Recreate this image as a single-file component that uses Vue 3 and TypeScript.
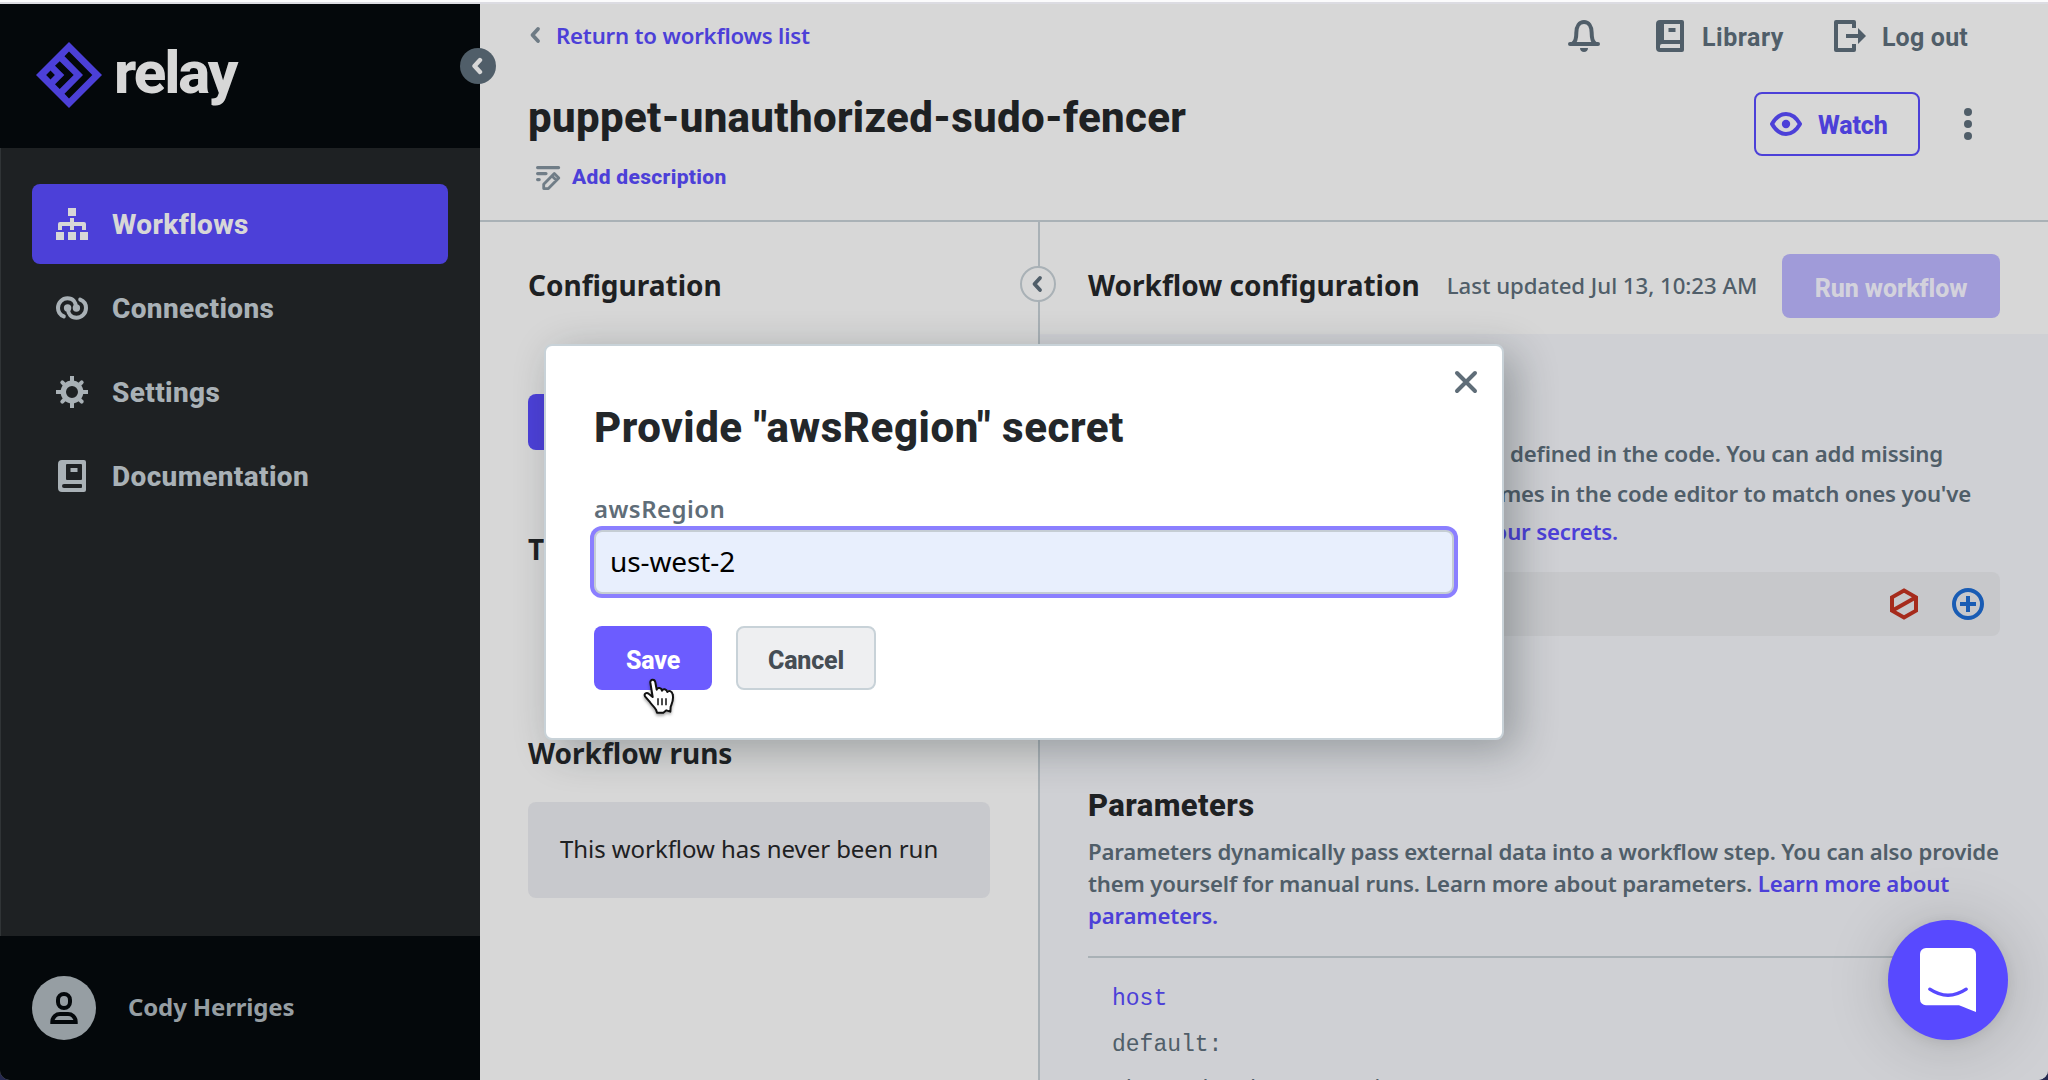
<script setup lang="ts">
import { ref } from 'vue'

interface NavItem {
  label: string
  icon: 'flow' | 'link' | 'gear' | 'book'
  active?: boolean
}

const navItems: NavItem[] = [
  { label: 'Workflows', icon: 'flow', active: true },
  { label: 'Connections', icon: 'link' },
  { label: 'Settings', icon: 'gear' },
  { label: 'Documentation', icon: 'book' },
]

const secretValue = ref('us-west-2')
const gearAngles = [45, 135, 225, 315]
</script>

<template>
  <div class="desktop">
    <div class="window">
      <div class="titlebar-edge"></div>
      <div class="app">
        <aside class="sidebar">
          <div class="brand">
            <svg class="brand-mark" width="66" height="66" viewBox="36 42 66 66">
              <path
                fill="#4c40d8"
                fill-rule="evenodd"
                d="M69 42L102 75L69 108L36 75ZM69 51.5L64.5 56.3L83 75L64.5 93.7L69 98.5L92.3 75ZM59.7 61.3L55 65.8L64.3 75L55 84.2L59.7 88.9L73.7 75ZM50.5 70.6L46.1 75L50.5 79.4L54.9 75Z"
              />
            </svg>
            <span class="brand-name">relay</span>
          </div>

          <nav class="nav">
            <a v-for="item in navItems" :key="item.label" class="nav-item" :class="{ active: item.active }">
              <svg v-if="item.icon === 'flow'" class="nav-icon" width="32" height="32" viewBox="0 0 32 32" fill="currentColor">
                <path d="M12 0h8v8h-8zM0 24h8v8H0zM12 24h8v8h-8zM24 24h8v8h-8z" />
                <path d="M14 10h4v4h10a2 2 0 0 1 2 2v6h-4v-4h-8v4h-4v-4H6v4H2v-6a2 2 0 0 1 2-2h10z" />
              </svg>
              <svg v-else-if="item.icon === 'link'" class="nav-icon" width="32" height="24" viewBox="0 0 32 24">
                <g fill="none" stroke="currentColor" stroke-width="4" stroke-linecap="round">
                  <path d="M7.8 20.4C4.3 19 2 16 2 12C2 6.500 6.300 2.300 11.500 2.300C17 2.300 20 6 20 11.500" />
                  <path d="M24.200 3.600C27.700 5 30 8 30 12C30 17.500 25.700 21.700 20.500 21.700C15 21.700 12 18 12 12.500" />
                </g>
                <circle cx="11.600" cy="12" r="3.700" fill="currentColor" />
                <circle cx="20.400" cy="12" r="3.700" fill="currentColor" />
              </svg>
              <svg v-else-if="item.icon === 'gear'" class="nav-icon" width="32" height="32" viewBox="0 0 32 32">
                <circle cx="16" cy="16" r="8.700" fill="none" stroke="currentColor" stroke-width="5.400" />
                <path d="M16 0v6M16 26v6M0 16h6M26 16h6" stroke="currentColor" stroke-width="4" />
                <path
                  v-for="a in gearAngles"
                  :key="a"
                  d="M16 5.500V2.300"
                  stroke="currentColor"
                  stroke-width="4"
                  stroke-linecap="round"
                  :transform="`rotate(${a} 16 16)`"
                />
              </svg>
              <svg v-else class="nav-icon book" width="28" height="32" viewBox="0 0 28 32">
                <path
                  fill="currentColor"
                  fill-rule="evenodd"
                  d="M4 0H26a2 2 0 0 1 2 2V30a2 2 0 0 1-2 2H4a4 4 0 0 1-4-4V4a4 4 0 0 1 4-4zM9 4a1 1 0 0 0-1 1V19a1 1 0 0 0 1 1H23a1 1 0 0 0 1-1V5a1 1 0 0 0-1-1zM12.500 8h7v4h-7zM6 24a2 2 0 0 0 0 4H23a1 1 0 0 0 1-1V25a1 1 0 0 0-1-1z"
                />
              </svg>
              <span class="nav-label">{{ item.label }}</span>
            </a>
          </nav>

          <div class="user">
            <div class="avatar">
              <svg width="28" height="32" viewBox="0 0 28 32" fill="none" stroke="#04080b" stroke-width="4">
                <rect x="8" y="2" width="12" height="14" rx="6" />
                <path d="M2.300 30C2.300 24.500 6.500 22 10 22H18C21.500 22 25.700 24.500 25.700 30Z" />
              </svg>
            </div>
            <span class="user-name">Cody Herriges</span>
          </div>

          <button class="collapse" type="button" aria-label="Collapse menu">
            <svg width="12" height="18" viewBox="0 0 12 18">
              <path d="M9 3L3.500 9L9 15" fill="none" stroke="#d7d7d7" stroke-width="4.400" stroke-linecap="round" stroke-linejoin="round" />
            </svg>
          </button>
        </aside>

        <main class="main">
          <header class="header">
            <div class="header-left">
              <a class="back">
                <svg width="12" height="18" viewBox="0 0 12 18">
                  <path d="M9 3L3.500 9L9 15" fill="none" stroke="#6e7b85" stroke-width="3.800" stroke-linecap="round" stroke-linejoin="round" />
                </svg>
                <span>Return to workflows list</span>
              </a>
              <h1 class="title">puppet-unauthorized-sudo-fencer</h1>
              <a class="describe">
                <svg width="25" height="25" viewBox="0 0 25 25" fill="none" stroke="#707d87" stroke-linecap="round" stroke-linejoin="round">
                  <path d="M1.600 1.600H22.600M1.600 7.600H10M1.600 13.600H3.200" stroke-width="3.200" />
                  <path d="M7.700 18.200L18.300 7.600L22.800 12L12.400 22.600H7.700ZM16.500 10.500L20 14" stroke-width="2.800" />
                </svg>
                <span>Add description</span>
              </a>
            </div>

            <div class="header-right">
              <div class="tools">
                <svg class="bell" width="32" height="32" viewBox="0 0 32 32">
                  <path d="M2 24H30M5 23.500C8.500 21 8.300 17 8.300 13C8.300 6 11.500 2 16 2S23.700 6 23.700 13C23.700 17 23.500 21 27 23.500" fill="none" stroke="#505e69" stroke-width="4" stroke-linecap="round" />
                  <path d="M12 28h8c0 2.500-1.800 4-4 4s-4-1.500-4-4z" fill="#505e69" />
                </svg>
                <a class="tool library">
                  <svg width="28" height="32" viewBox="0 0 28 32">
                    <path
                      fill="#505e69"
                      fill-rule="evenodd"
                      d="M4 0H26a2 2 0 0 1 2 2V30a2 2 0 0 1-2 2H4a4 4 0 0 1-4-4V4a4 4 0 0 1 4-4zM8 4V20H24V4zM12.500 8h7v4h-7zM6 24a2 2 0 0 0-2 2V28H24V24z"
                    />
                  </svg>
                  <span>Library</span>
                </a>
                <a class="tool logout">
                  <svg width="32" height="32" viewBox="0 0 32 32">
                    <path d="M20 8V2H2V30H20V24" fill="none" stroke="#505e69" stroke-width="4" stroke-linejoin="round" />
                    <path d="M12 14H24V8L32 16L24 24V18H12Z" fill="#505e69" />
                  </svg>
                  <span>Log out</span>
                </a>
              </div>
              <div class="actions">
                <button class="watch" type="button">
                  <svg width="32" height="24" viewBox="0 0 32 24">
                    <path d="M2 12C6 5 11 2 16 2S26 5 30 12C26 19 21 22 16 22S6 19 2 12Z" fill="none" stroke="#4c40d8" stroke-width="4" stroke-linejoin="round" />
                    <circle cx="16" cy="12" r="4.200" fill="#4c40d8" />
                  </svg>
                  <span>Watch</span>
                </button>
                <svg class="more" width="8" height="32" viewBox="0 0 8 32" fill="#505e69">
                  <circle cx="4" cy="4" r="4" />
                  <circle cx="4" cy="16" r="4" />
                  <circle cx="4" cy="28" r="4" />
                </svg>
              </div>
            </div>
          </header>

          <div class="columns">
            <section class="side">
              <h2 class="heading">Configuration</h2>
              <div class="primary-tab"></div>
              <h2 class="heading triggers">Triggers</h2>
              <h2 class="heading runs">Workflow runs</h2>
              <div class="empty">This workflow has never been run</div>
              <button class="side-toggle" type="button" aria-label="Collapse panel">
                <svg width="12" height="18" viewBox="0 0 12 18">
                  <path d="M9 3L3.500 9L9 15" fill="none" stroke="#505e69" stroke-width="3.800" stroke-linecap="round" stroke-linejoin="round" />
                </svg>
              </button>
            </section>

            <section class="content">
              <div class="content-head">
                <h2 class="heading flat">Workflow configuration</h2>
                <span class="updated">Last updated Jul 13, 10:23 AM</span>
                <button class="run" type="button">Run workflow</button>
              </div>
              <div class="content-body">
                <div class="secrets-copy">
                  <p class="line-a">defined in the code. You can add missing</p>
                  <p class="line-b">names in the code editor to match ones you've</p>
                  <p class="line-c"><a>your secrets.</a></p>
                </div>
                <div class="secret-row">
                  <svg width="28" height="32" viewBox="0 0 28 32">
                    <path d="M14 2.500L26 9.300V22.700L14 29.500L2 22.700V9.300ZM2.500 22.500L25.500 9.500" fill="none" stroke="#a62b1c" stroke-width="4" />
                  </svg>
                  <svg width="32" height="32" viewBox="0 0 32 32" fill="none" stroke="#195cb4" stroke-width="4">
                    <circle cx="16" cy="16" r="14" />
                    <path d="M16 8V24M8 16H24" />
                  </svg>
                </div>
                <h3 class="params-title">Parameters</h3>
                <p class="params-copy">
                  Parameters dynamically pass external data into a workflow step. You can also provide<br />
                  them yourself for manual runs. Learn more about parameters. <a>Learn more about<br />parameters.</a>
                </p>
                <div class="params-list">
                  <div class="param-name">host</div>
                  <div>default:</div>
                  <div>The node that must be</div>
                </div>
              </div>
            </section>
          </div>
        </main>
      </div>

      <div class="modal" role="dialog">
        <button class="close" type="button" aria-label="Close">
          <svg width="24" height="24" viewBox="0 0 24 24">
            <path d="M3 3L21 21M21 3L3 21" stroke="#5f6d78" stroke-width="4" stroke-linecap="round" />
          </svg>
        </button>
        <h2 class="modal-title">Provide "awsRegion" secret</h2>
        <label class="field-label" for="secret">awsRegion</label>
        <input id="secret" v-model="secretValue" class="field" type="text" />
        <div class="modal-actions">
          <button class="btn save" type="button">Save</button>
          <button class="btn cancel" type="button">Cancel</button>
        </div>
      </div>

      <svg class="pointer" width="35" height="37" viewBox="0 0 105 111">
        <path
          d="M28 14C27 3 41 2 43 13L47 35C50 27 61 29 63 38C66 31 77 33 79 42C83 36 93 39 95 49C99 66 93 76 89 86L88 101L76 97L67 104H48L45 95C39 85 30 79 25 70L12 55C8 46 17 42 24 48L35 57Z"
          fill="#fff"
          stroke="#111"
          stroke-width="6"
          stroke-linejoin="round"
        />
        <path d="M51 61V82M63 61V82M75 61V82" stroke="#111" stroke-width="4.500" />
      </svg>

      <button class="messenger" type="button" aria-label="Open messenger">
        <svg width="56" height="64" viewBox="0 0 56 64">
          <path d="M6 0H50a6 6 0 0 1 6 6V64C50 62 44 59 39 57.300H6a6 6 0 0 1-6-6V6a6 6 0 0 1 6-6z" fill="#fff" />
          <path d="M9.800 41.200Q28 53.400 46.200 41.200" fill="none" stroke="#5849ff" stroke-width="3.400" stroke-linecap="round" />
        </svg>
      </button>
    </div>
  </div>
</template>

<style>
body {
  margin: 0;
}
</style>

<style scoped>
* {
  box-sizing: border-box;
}
h1,
h2,
h3,
p {
  margin: 0;
}
button {
  padding: 0;
  border: 0;
  font: inherit;
}
svg {
  display: block;
  flex: none;
}
.desktop {
  width: 2048px;
  height: 1080px;
  overflow: hidden;
  background: #25284f;
  font-family: "Noto Sans", sans-serif;
  color: #1e2123;
}
.window {
  position: relative;
  display: flex;
  flex-direction: column;
  width: 2048px;
  height: 1080px;
  overflow: hidden;
  border-radius: 0 0 10px 10px;
  background: #d7d7d7;
}
.titlebar-edge {
  flex: none;
  height: 4px;
  background: #dcdce2;
  border-top: 2px solid #fbfbfc;
}
.app {
  display: flex;
  flex: none;
  height: 1076px;
}

/* Sidebar */
.sidebar {
  position: relative;
  display: flex;
  flex: none;
  flex-direction: column;
  width: 480px;
  background: #1e2123;
  box-shadow: inset 1px 0 #303436;
}
.brand {
  display: flex;
  align-items: flex-start;
  height: 144px;
  padding: 38px 0 0 36px;
  background: #04080b;
}
.brand-name {
  margin: -1px 0 0 12px;
  font: 800 60px/63px Roboto, sans-serif;
  letter-spacing: -2.1px;
  color: #d7d7d7;
}
.nav {
  display: flex;
  flex: 1;
  flex-direction: column;
  gap: 4px;
  padding: 36px 32px 0;
}
.nav-item {
  display: flex;
  align-items: center;
  gap: 24px;
  height: 80px;
  padding-left: 24px;
  border-radius: 8px;
  font: 800 28px/40px Roboto, sans-serif;
  letter-spacing: 0.35px;
  color: #a9b1b6;
}
.nav-item.active {
  background: #4c40d8;
  color: #d7d7d7;
}
.nav-label {
  padding-top: 2px;
}
.nav-icon.book {
  margin: 0 2px;
}
.user {
  display: flex;
  align-items: center;
  gap: 32px;
  height: 144px;
  padding-left: 32px;
  background: #04080b;
}
.avatar {
  display: flex;
  align-items: center;
  justify-content: center;
  width: 64px;
  height: 64px;
  border-radius: 50%;
  background: #969ea3;
}
.user-name {
  padding-bottom: 3px;
  font-size: 24px;
  font-weight: 700;
  line-height: 32px;
  letter-spacing: -0.15px;
  color: #969ea3;
}
.collapse {
  position: absolute;
  top: 44px;
  right: -16px;
  display: flex;
  align-items: center;
  justify-content: center;
  width: 36px;
  height: 36px;
  padding-right: 2px;
  border-radius: 50%;
  background: #505e69;
}

/* Page header */
.main {
  display: flex;
  flex: 1;
  flex-direction: column;
  min-width: 0;
}
.header {
  display: flex;
  flex: none;
  justify-content: space-between;
  height: 218px;
  border-bottom: 2px solid #a9b1b6;
}
.header-left {
  padding: 15px 0 0 48px;
}
.back {
  display: flex;
  align-items: center;
  gap: 15px;
  height: 32px;
  padding-left: 1px;
  font-size: 22.2px;
  font-weight: 600;
  letter-spacing: -0.2px;
  color: #4c40d8;
}
.title {
  margin-top: 43px;
  font: 800 42px/48px Roboto, sans-serif;
  letter-spacing: 0.33px;
}
.describe {
  display: flex;
  gap: 11px;
  margin-top: 24px;
  padding-left: 8px;
  font: 800 21px/23px Roboto, sans-serif;
  letter-spacing: 0.32px;
  color: #4c40d8;
}
.header-right {
  display: flex;
  flex-direction: column;
  align-items: flex-end;
  padding-top: 16px;
}
.tools {
  display: flex;
  align-items: center;
  height: 32px;
  padding-right: 80px;
}
.tool {
  display: flex;
  align-items: center;
  font: 700 25px/30px Roboto, sans-serif;
  color: #505e69;
}
.tool span {
  padding-top: 4px;
}
.library {
  gap: 18px;
  margin: 0 50px 0 56px;
  letter-spacing: 0.5px;
}
.logout {
  gap: 16px;
  letter-spacing: 0.2px;
}
.actions {
  display: flex;
  align-items: center;
  margin-top: 40px;
  padding-right: 76px;
}
.watch {
  display: flex;
  align-items: center;
  gap: 16px;
  width: 166px;
  height: 64px;
  padding-left: 14px;
  border: 2px solid #4c40d8;
  border-radius: 8px;
  background: transparent;
  font: 800 25px/30px Roboto, sans-serif;
  letter-spacing: -0.15px;
  color: #4c40d8;
}
.watch span {
  padding-top: 4px;
}
.more {
  margin-left: 44px;
}

/* Columns */
.columns {
  display: flex;
  flex: 1;
  min-height: 0;
}
.heading {
  font-size: 28px;
  font-weight: 700;
  line-height: 40px;
}
.side {
  position: relative;
  flex: none;
  width: 560px;
  padding: 43px 48px 0;
  border-right: 2px solid #a9b1b6;
}
.primary-tab {
  height: 56px;
  margin-top: 89px;
  border-radius: 8px;
  background: #4c40d8;
}
.triggers {
  margin-top: 79px;
}
.runs {
  margin-top: 164px;
}
.empty {
  display: flex;
  align-items: center;
  height: 96px;
  margin-top: 29px;
  padding: 0 0 3px 32px;
  border-radius: 8px;
  background: #c8c9cd;
  font-size: 24px;
  letter-spacing: -0.06px;
}
.side-toggle {
  position: absolute;
  top: 44px;
  right: -18px;
  display: flex;
  align-items: center;
  justify-content: center;
  width: 36px;
  height: 36px;
  padding-right: 2px;
  border: 2px solid #a9b1b6;
  border-radius: 50%;
  background: #d7d7d7;
}
.content {
  display: flex;
  flex: 1;
  flex-direction: column;
  min-width: 0;
  overflow: hidden;
}
.content-head {
  display: flex;
  flex: none;
  align-items: center;
  height: 112px;
  padding: 16px 48px 0;
}
.flat {
  padding-bottom: 2px;
}
.updated {
  margin-left: 27px;
  padding-bottom: 1px;
  font-size: 22.2px;
  font-weight: 550;
  letter-spacing: -0.02px;
  color: #505e69;
}
.run {
  width: 218px;
  height: 64px;
  margin-left: auto;
  padding-top: 5px;
  border-radius: 8px;
  background: #a09bd9;
  font: 800 25px/30px Roboto, sans-serif;
  letter-spacing: -0.1px;
  color: #d3d2dc;
}
.content-body {
  flex: 1;
  padding: 100px 48px 0;
  background: #cfd0d4;
}
.content-body a {
  color: #4c40d8;
}
.secrets-copy {
  font-size: 22.2px;
  font-weight: 600;
  line-height: 40px;
  letter-spacing: -0.18px;
  text-align: right;
  white-space: nowrap;
  color: #505e69;
}
.line-a {
  width: 855px;
}
.line-b {
  width: 883px;
}
.line-c {
  width: 530px;
  line-height: 36px;
}
.secret-row {
  display: flex;
  align-items: center;
  justify-content: flex-end;
  gap: 34px;
  height: 64px;
  margin-top: 22px;
  padding-right: 16px;
  border-radius: 8px;
  background: #c7c8cb;
}
.params-title {
  margin-top: 150px;
  font: 800 31px/40px Roboto, sans-serif;
  letter-spacing: 0.4px;
}
.params-copy {
  margin-top: 10px;
  padding-bottom: 24px;
  border-bottom: 2px solid #a9b1b6;
  font-size: 22.2px;
  font-weight: 600;
  line-height: 32px;
  letter-spacing: -0.18px;
  white-space: nowrap;
  color: #505e69;
}
.params-list {
  padding: 18px 0 0 24px;
  font: 400 23px/46px "Liberation Mono", monospace;
  color: #505e69;
}
.param-name {
  color: #4c40d8;
}

/* Dialog */
.modal {
  position: absolute;
  top: 344px;
  left: 544px;
  display: flex;
  flex-direction: column;
  width: 960px;
  height: 396px;
  padding: 58px 48px 0;
  border: 2px solid #c8d2d8;
  border-radius: 8px;
  background: #fff;
  box-shadow: 12px 10px 42px rgba(20, 32, 36, 0.3);
}
.close {
  position: absolute;
  top: 24px;
  right: 24px;
  background: transparent;
}
.modal-title {
  font: 800 42px/48px Roboto, sans-serif;
  letter-spacing: 0.56px;
  color: #23272a;
}
.field-label {
  margin-top: 41px;
  font-size: 24px;
  font-weight: 600;
  line-height: 32px;
  letter-spacing: 0.45px;
  color: #5f6d78;
}
.field {
  width: 860px;
  height: 64px;
  margin-top: 5px;
  padding: 0 14px 3px;
  border: 2px solid #c5cdd4;
  border-radius: 8px;
  outline: none;
  background: #e8effd;
  box-shadow: 0 0 0 4px #8b7fff;
  font: 400 28px/36px "Noto Sans", sans-serif;
  letter-spacing: -0.1px;
  color: #000;
}
.modal-actions {
  display: flex;
  gap: 24px;
  margin-top: 32px;
}
.btn {
  height: 64px;
  padding-top: 5px;
  border-radius: 8px;
  font: 800 25px/30px Roboto, sans-serif;
  letter-spacing: -0.2px;
}
.save {
  width: 118px;
  background: #6c5cff;
  color: #fff;
}
.cancel {
  width: 140px;
  border: 2px solid #c8d2d8;
  background: #eeeff1;
  color: #454d54;
}

.pointer {
  position: absolute;
  top: 678px;
  left: 641px;
  filter: drop-shadow(0 2px 1.500px rgba(0, 0, 0, 0.35));
}
.messenger {
  position: absolute;
  top: 920px;
  left: 1888px;
  display: flex;
  align-items: flex-start;
  justify-content: center;
  width: 120px;
  height: 120px;
  padding-top: 28px;
  border-radius: 50%;
  background: #5849ff;
  box-shadow: 0 2px 12px rgba(0, 0, 0, 0.08), 0 4px 64px rgba(0, 0, 0, 0.18);
}
</style>
